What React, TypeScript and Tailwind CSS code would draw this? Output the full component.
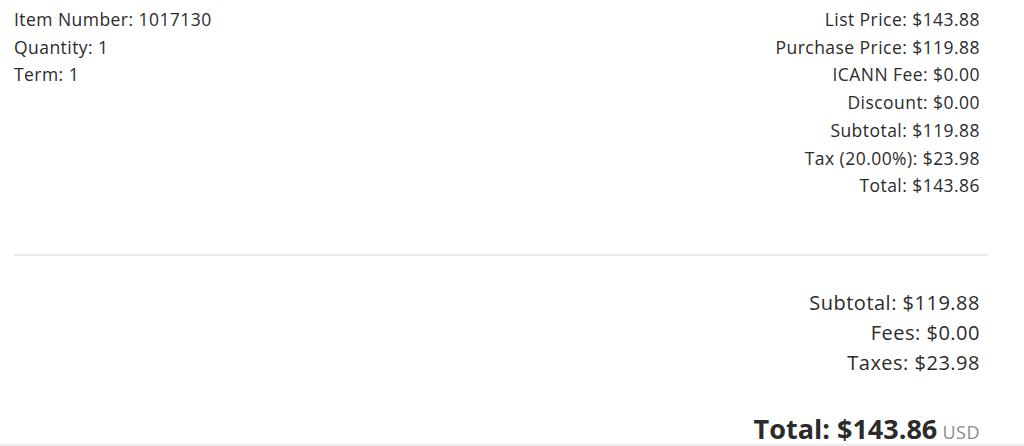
const details = ["Item Number: 1017130", "Quantity: 1", "Term: 1"]

const prices = [
  "List Price: $143.88",
  "Purchase Price: $119.88",
  "ICANN Fee: $0.00",
  "Discount: $0.00",
  "Subtotal: $119.88",
  "Tax (20.00%): $23.98",
  "Total: $143.86",
]

const summary = ["Subtotal: $119.88", "Fees: $0.00", "Taxes: $23.98"]

export default function App() {
  return (
    <div
      className="h-[446px] w-[1024px] overflow-hidden border-b-2 border-[#ececec] bg-white text-[#2b2b2b]"
      style={{ fontFamily: '"Open Sans", sans-serif' }}
    >
      <div className="pl-[14px] pr-[36px]">
        <div className="flex justify-between pt-[6px] pr-[8px] text-[17.5px] leading-[27.7px] tracking-[0.45px]">
          <div>
            {details.map((d) => (
              <div key={d}>{d}</div>
            ))}
          </div>
          <div className="text-right">
            {prices.map((p) => (
              <div key={p}>{p}</div>
            ))}
          </div>
        </div>

        <div className="mt-[54px] h-[2px] bg-[#e8e8e8]" />

        <div className="pr-[8px] pt-[32px] text-right">
          <div className="text-[20px] leading-[30px] tracking-[0.5px]">
            {summary.map((s) => (
              <div key={s}>{s}</div>
            ))}
          </div>
          <div className="mt-[34px] leading-[33px]">
            <span className="text-[27px] font-bold">Total: $143.86</span>{" "}
            <span className="ml-[1px] text-[18px] tracking-[0.5px] text-[#8a8a8a]">USD</span>
          </div>
        </div>
      </div>
    </div>
  )
}
